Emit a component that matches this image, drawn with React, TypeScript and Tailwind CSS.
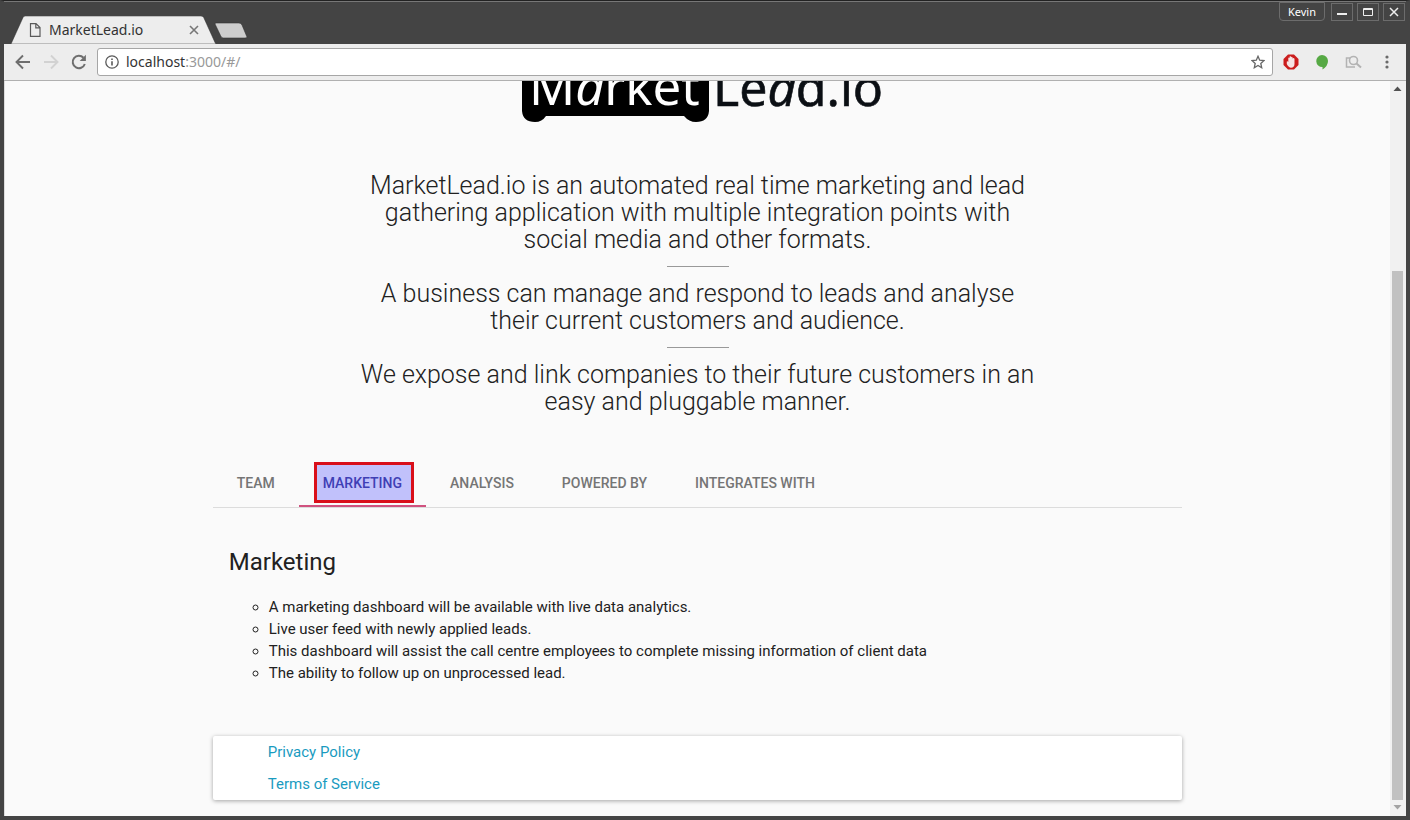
import { useState } from "react";

const tabs = ["Team", "Marketing", "Analysis", "Powered by", "Integrates with"];

const points = [
  "A marketing dashboard will be available with live data analytics.",
  "Live user feed with newly applied leads.",
  "This dashboard will assist the call centre employees to complete missing information of client data",
  "The ability to follow up on unprocessed lead.",
];

function TitleBar() {
  return (
    <header className="flex h-[43px] items-end justify-between border-t border-[#777] bg-[#444] pl-[7px]">
      <div className="flex items-end">
        <div className="relative flex h-[28px] w-[205px] items-center pr-[17px] pl-[17px]">
          <svg className="absolute inset-0" width="205" height="28" viewBox="0 0 205 28" aria-hidden="true">
            <path d="M0 28 L12 1.500 Q12.600 0 14 0 H190 Q192 0 192.700 1.500 L204 26.500 L205 28 Z" fill="#ededed" stroke="#2f2f2f" strokeWidth="0.500" />
          </svg>
          <svg className="relative" width="14" height="16" viewBox="0 0 14 16" fill="none" stroke="#5a5a5a" strokeWidth="1.200" aria-hidden="true">
            <path d="M2.500 1.600 H8 L12 5.600 V14.400 H2.500 Z M7.800 1.600 V5.800 H12" />
          </svg>
          <span className="relative ml-[7px] flex-1 text-[14px] leading-[20px] text-[#333]">MarketLead.io</span>
          <button type="button" aria-label="Close tab" className="relative">
            <svg width="10" height="10" viewBox="0 0 10 10" stroke="#777" strokeWidth="1.600">
              <path d="M1 1 L9 9 M9 1 L1 9" />
            </svg>
          </button>
        </div>
        <button type="button" aria-label="New tab" className="-ml-[2px] mb-[5px]">
          <svg width="34" height="17" viewBox="0 0 34 17">
            <path d="M2 1 H25 Q27 1 28 3 L33 15 Q33 16 31 16 H9 Q7.500 16 6.500 13.500 L1 2 Q1 1 2 1 Z" fill="#cdcdcd" stroke="#333" strokeWidth="0.600" />
          </svg>
        </button>
      </div>
      <div className="flex items-start gap-[6px] self-start pr-[1px]">
        <button type="button" className="h-[19px] w-[46px] rounded-b-[4px] border border-[#6c6c6c] text-[11px] leading-[17px] text-white">
          Kevin
        </button>
        <div className="flex gap-[4px] pt-[1px]">
          <button type="button" aria-label="Minimise" className="flex h-[18px] w-[22px] items-center justify-center border border-[#6c6c6c]">
            <svg width="12" height="12" viewBox="0 0 12 12" stroke="#eee" strokeWidth="2"><path d="M1 8 H11" /></svg>
          </button>
          <button type="button" aria-label="Maximise" className="flex h-[18px] w-[22px] items-center justify-center border border-[#6c6c6c]">
            <svg width="12" height="12" viewBox="0 0 12 12" fill="none" stroke="#eee"><path d="M1.500 2.500 H10.500 V9.500 H1.500 Z M1 3.500 H11" /></svg>
          </button>
          <button type="button" aria-label="Close" className="flex h-[18px] w-[22px] items-center justify-center border border-[#6c6c6c]">
            <svg width="12" height="12" viewBox="0 0 12 12" stroke="#eee" strokeWidth="1.500"><path d="M2 2 L10 10 M10 2 L2 10" /></svg>
          </button>
        </div>
      </div>
    </header>
  );
}

function Toolbar() {
  return (
    <div className="flex h-[37px] items-center border-b border-[#b0b0b0] bg-[#ededed] pr-[10px] pl-[11px]">
      <nav className="flex items-center gap-[12px]" aria-label="Browser">
        <button type="button" aria-label="Back">
          <svg width="16" height="16" viewBox="0 0 16 16" fill="none" stroke="#6e6e6e" strokeWidth="1.900"><path d="M15 8 H2 M8 1.500 L1.500 8 L8 14.500" /></svg>
        </button>
        <button type="button" aria-label="Forward">
          <svg width="16" height="16" viewBox="0 0 16 16" fill="none" stroke="#d2d2d2" strokeWidth="1.900"><path d="M1 8 H14 M8 1.500 L14.500 8 L8 14.500" /></svg>
        </button>
        <button type="button" aria-label="Reload">
          <svg width="16" height="16" viewBox="0 0 16 16" fill="none">
            <path d="M13.800 10 A6.200 6.200 0 1 1 12.500 3.800" stroke="#6e6e6e" strokeWidth="2" />
            <path d="M14.900 0.800 V7 H8.700 Z" fill="#6e6e6e" />
          </svg>
        </button>
      </nav>
      <div className="ml-[10px] flex h-[28px] flex-1 items-center rounded-[3px] border border-[#a6a6a6] bg-white px-[7px]">
        <svg className="shrink-0" width="14" height="14" viewBox="0 0 14 14" fill="none" stroke="#5a5a5a" aria-hidden="true">
          <circle cx="7" cy="7" r="6.200" strokeWidth="1.300" />
          <path d="M7 6.200 V10.500 M7 3.500 V5" strokeWidth="1.600" />
        </svg>
        <div aria-label="Address" className="ml-[7px] flex-1 text-[14px] leading-[20px] text-[#999]">
          <span className="text-[#333]">localhost</span>:3000/#/
        </div>
        <button type="button" aria-label="Bookmark">
          <svg width="14" height="14" viewBox="0 0 14 14" fill="none" stroke="#666" strokeWidth="1.300">
            <path d="M7 1.300 L8.700 5.200 L13 5.600 L9.800 8.400 L10.700 12.700 L7 10.400 L3.300 12.700 L4.200 8.400 L1 5.600 L5.300 5.200 Z" />
          </svg>
        </button>
      </div>
      <div className="ml-[10px] flex items-center gap-[15px]">
        <button type="button" aria-label="Ad blocker">
          <svg width="16" height="16" viewBox="0 0 16 16">
            <path d="M5 0.500 H11 L15.500 5 V11 L11 15.500 H5 L0.500 11 V5 Z" fill="#cb1d1d" />
            <path d="M3.800 7.500 Q4.500 6.600 5.300 8 V4 Q5.900 3 6.600 4 V2.600 Q7.300 1.800 8 2.600 V3.200 Q8.800 2.300 9.500 3.200 V4.500 Q10.500 3.500 11.500 4.800 V10 Q11.300 13.800 8 13.800 Q5.800 13.800 3.800 10 Z" fill="#f6e4e4" />
          </svg>
        </button>
        <button type="button" aria-label="Chat">
          <svg width="16" height="16" viewBox="0 0 16 16"><path d="M8 1 A6 6 0 0 1 14 7 Q14 12 8.500 15.500 V13 A6 6 0 0 1 8 1 Z" fill="#56a944" /></svg>
        </button>
        <button type="button" aria-label="Inspect page">
          <svg width="18" height="16" viewBox="0 0 18 16" fill="none" stroke="#b3b3b3">
            <path d="M5 4 H1.500 V13 H10" strokeWidth="1.500" />
            <circle cx="8.500" cy="6.500" r="4" strokeWidth="1.600" />
            <path d="M11.500 9.500 L16 13.500" strokeWidth="2" />
          </svg>
        </button>
        <button type="button" aria-label="Menu" className="flex w-[18px] justify-center">
          <svg width="4" height="14" viewBox="0 0 4 14" fill="#6a6a6a"><circle cx="2" cy="2" r="1.600" /><circle cx="2" cy="7" r="1.600" /><circle cx="2" cy="12" r="1.600" /></svg>
        </button>
      </div>
    </div>
  );
}

function Logo() {
  return (
    <svg className="block" width="370" height="42" viewBox="513 81 370 42" role="img" aria-label="MarketLead.io" fontFamily="'Noto Sans', sans-serif">
      <path d="M522 81 H709 V111 Q708 122 696 122 Q689 122 684 116 H546 Q542 122 535 122 Q523 122 522 111 Z" fill="#000" />
      <text x="529" y="105" fontSize="51" fill="#fff">M<tspan fontStyle="italic">a</tspan>rket</text>
      <text x="713" y="106" fontSize="50" fill="#0b0f14" stroke="#0b0f14" strokeWidth="0.600">Le<tspan fontStyle="italic">a</tspan>d.io</text>
    </svg>
  );
}

function ScrollBar() {
  return (
    <div className="flex w-[16px] shrink-0 flex-col items-center bg-[#f1f1f1] pr-[1px]" aria-hidden="true">
      <svg width="9" height="16" viewBox="0 0 9 16" fill="#505050"><path d="M0.500 10 L4.500 5.500 L8.500 10 Z" /></svg>
      <div className="grow-[174]" />
      <div className="w-[11px] grow-[529] bg-[#c1c1c1]" />
      <svg width="9" height="16" viewBox="0 0 9 16" fill="#a3a3a3"><path d="M0.500 5 L4.500 9.500 L8.500 5 Z" /></svg>
    </div>
  );
}

export default function App() {
  const [active, setActive] = useState("Marketing");
  return (
    <div className="flex min-h-screen flex-col border-x-4 border-t border-b-4 border-x-[#444] border-t-[#222] border-b-[#444] bg-[#fafafa] font-['Noto_Sans',sans-serif]">
      <TitleBar />
      <Toolbar />
      <div className="flex flex-1 border-l border-[#ddd]">
        <main className="flex flex-1 flex-col items-center font-[Roboto,sans-serif] text-[#212121]">
          <Logo />
          <section className="mt-[49px] w-1/2 px-[8px] text-center text-[25px] leading-[27px] font-light">
            <p>MarketLead.io is an automated real time marketing and lead gathering application with multiple integration points with social media and other formats.</p>
            <hr className="mx-auto my-[13px] w-[62px] border-[#999]" />
            <p>A business can manage and respond to leads and analyse their current customers and audience.</p>
            <hr className="mx-auto my-[13px] w-[62px] border-[#999]" />
            <p>We expose and link companies to their future customers in an easy and pluggable manner.</p>
          </section>
          <div className="mt-[45px] w-[70%]">
            <div role="tablist" className="flex h-[48px] border-b border-[#dcdcdc]">
              {tabs.map((tab) => (
                <button
                  key={tab}
                  type="button"
                  role="tab"
                  aria-selected={active === tab}
                  onClick={() => setActive(tab)}
                  className={
                    active === tab
                      ? "relative px-[24px] text-[14px] font-medium text-[#3f3fb5] uppercase"
                      : "relative px-[24px] text-[14px] font-medium text-[#757575] uppercase"
                  }
                >
                  {active === tab && (
                    <>
                      <span className="absolute inset-x-0 bottom-0 h-[2px] bg-[#d0527f]" />
                      <span className="absolute top-[2px] right-[12px] left-[15px] h-[41px] border-3 border-[#d90f1a] bg-[#c1c1fb]" />
                    </>
                  )}
                  <span className="relative">{tab}</span>
                </button>
              ))}
            </div>
            <section role="tabpanel" className="px-[16px] pt-[38px]">
              <h1 className="text-[24px] leading-[32px]">Marketing</h1>
              <ul className="mt-[18px] list-[circle] pl-[40px] text-[15px] leading-[22px]">
                {points.map((point) => (
                  <li key={point}>{point}</li>
                ))}
              </ul>
            </section>
            <footer className="mt-[52px] rounded-[2px] bg-white pl-[55px] text-[15px] leading-[32px] text-[#1a9bbf] shadow-[0_1px_4px_rgba(0,0,0,0.35)]">
              <a href="#privacy" className="block">Privacy Policy</a>
              <a href="#terms" className="block">Terms of Service</a>
            </footer>
          </div>
        </main>
        <ScrollBar />
      </div>
    </div>
  );
}
